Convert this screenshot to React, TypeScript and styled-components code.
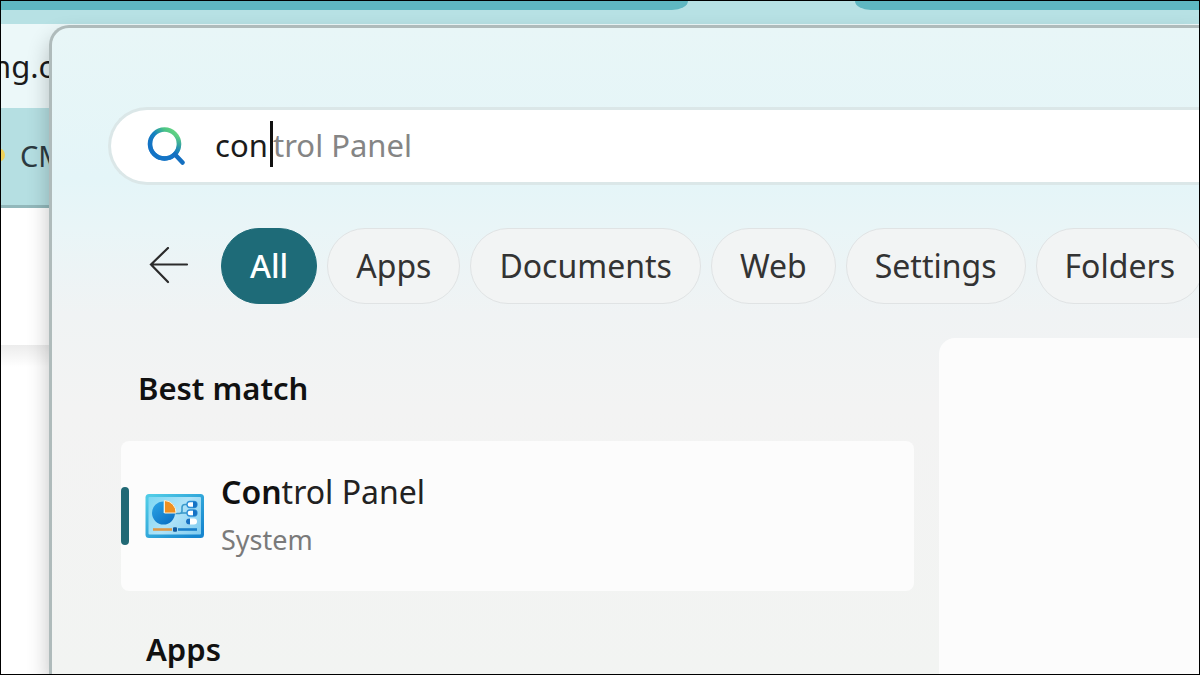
import React, { useState } from "react";
import styled, { createGlobalStyle } from "styled-components";

const GlobalStyle = createGlobalStyle`
  * { box-sizing: border-box; }
  body {
    margin: 0;
    font-family: "Noto Sans", "Open Sans", sans-serif;
    color: #1b1b1b;
  }
  button, input { font: inherit; color: inherit; }
  h2, p { margin: 0; }
`;

const Desktop = styled.main`
  position: relative;
  height: 100vh;
  border: 1px solid #000;
  background: #fff;
  overflow: hidden;
`;

/* Browser window behind the search panel */
const Browser = styled.div`
  display: flex;
  flex-direction: column;
  height: 100%;
`;

const TabStrip = styled.div`
  display: grid;
  grid-template-columns: 687fr 167fr 344fr;
  height: 23px;
  flex: none;
  background: #b7e1e4;
`;

const TabGroup = styled.div<{ $side: "left" | "right" }>`
  height: 9px;
  background: #5fb7c1;
  grid-column: ${(p) => (p.$side === "left" ? 1 : 3)};
  border-radius: ${(p) => (p.$side === "left" ? "0 0 16px 0" : "0 0 0 16px")} / ${(p) =>
    p.$side === "left" ? "0 0 9px 0" : "0 0 0 9px"};
`;

const AddressBar = styled.div`
  display: flex;
  align-items: center;
  height: 84px;
  flex: none;
  background: #ecf8f9;
  font-size: 31px;
`;

const AddressText = styled.span`
  margin-left: -9px;
`;

const BookmarkBar = styled.div`
  display: flex;
  align-items: center;
  gap: 15px;
  height: 100px;
  flex: none;
  padding-bottom: 3px;
  background: #b5dfe2;
  border-bottom: 3px solid #92b8bb;
  font-size: 29px;
  color: #2c3a40;
`;

const BookmarkDot = styled.span`
  width: 14px;
  height: 14px;
  margin-left: -10px;
  border-radius: 50%;
  background: #efd35c;
`;

const PageHeader = styled.div`
  height: 137px;
  flex: none;
`;

const PageBody = styled.div`
  flex: 1;
  background: linear-gradient(#ececec, #fff 22px);
`;

/* Search flyout */
const Panel = styled.section`
  position: absolute;
  inset: 24px 0 0 48px;
  display: flex;
  flex-direction: column;
  border: 3px solid #afbbbb;
  border-width: 3px 0 0 3px;
  border-top-left-radius: 20px;
  background: linear-gradient(#e8f6f7 0, #e4f5f8 150px, #e9f5f7 200px, #f0f3f4 285px, #f3f3f3 380px, #f2f4f2 100%);
  box-shadow: 0 12px 22px rgba(0, 0, 0, 0.24);
  padding: 79px 0 0 56px;
`;

const SearchBox = styled.label`
  display: flex;
  align-items: center;
  height: 78px;
  flex: none;
  padding-left: 36px;
  border: 3px solid #dbe7e8;
  border-right: 0;
  border-radius: 39px 0 0 39px;
  background: #fff;
  font-size: 31px;
`;

const Query = styled.input`
  width: 55px;
  height: 46px;
  margin-left: 30px;
  padding: 0 0 2px;
  border: 0;
  outline: 0;
  background: none;
`;

const Caret = styled.span`
  width: 3px;
  height: 46px;
  margin-bottom: 4px;
  background: #111;
`;

const Suggestion = styled.span`
  padding-bottom: 2px;
  color: #858585;
`;

const Filters = styled.nav`
  display: flex;
  align-items: center;
  gap: 10px;
  flex: none;
  margin-top: 43px;
  padding-left: 41px;
`;

const BackButton = styled.button`
  display: flex;
  width: 62px;
  flex: none;
  padding: 0;
  border: 0;
  background: none;
`;

const Chip = styled.button<{ $active?: boolean }>`
  height: 76px;
  flex: none;
  padding: 0 28px;
  border: 1px solid ${(p) => (p.$active ? "#1e6b78" : "#e0e3e4")};
  border-radius: 38px;
  background: ${(p) => (p.$active ? "#1e6b78" : "#f2f4f4")};
  color: ${(p) => (p.$active ? "#fff" : "#333")};
  font-size: 32px;
  font-weight: ${(p) => (p.$active ? 500 : 400)};
  line-height: 44px;
`;

const Content = styled.div`
  display: grid;
  grid-template-columns: 61fr 20fr;
  gap: 25px;
  flex: 1;
  margin-top: 34px;
  padding-left: 13px;
`;

const Results = styled.div`
  display: flex;
  flex-direction: column;
`;

const Heading = styled.h2<{ $inset: number }>`
  padding: 28px 0 0 ${(p) => p.$inset}px;
  font-size: 31px;
  line-height: 44px;
  font-weight: 600;
  color: #111;
`;

const ResultCard = styled.button`
  display: flex;
  align-items: center;
  height: 150px;
  margin: 31px 0 8px;
  padding: 0;
  border: 0;
  border-radius: 8px;
  background: #fcfcfc;
  text-align: left;
`;

const Accent = styled.span`
  width: 8px;
  height: 58px;
  border-radius: 4px;
  background: #216975;
`;

const ResultIcon = styled.svg`
  margin: 0 16px 0 16px;
`;

const ResultText = styled.span`
  display: flex;
  flex-direction: column;
  gap: 6px;
  padding-bottom: 2px;
`;

const ResultTitle = styled.span`
  font-size: 32px;
  line-height: 44px;
  color: #222;

  b { font-weight: 600; color: #111; }
`;

const ResultKind = styled.span`
  font-size: 27px;
  line-height: 40px;
  color: #7a7a7a;
`;

const Preview = styled.aside`
  border-top-left-radius: 16px;
  background: #fcfcfc;
`;

const SearchIcon = () => (
  <svg width="38" height="40" viewBox="0 0 38 40" fill="none" aria-hidden="true">
    <defs>
      <linearGradient id="lens" x1="6" y1="26" x2="28" y2="6" gradientUnits="userSpaceOnUse">
        <stop offset="0" stopColor="#1170c4" />
        <stop offset="0.45" stopColor="#1480c0" />
        <stop offset="0.8" stopColor="#4cc585" />
        <stop offset="1" stopColor="#62d283" />
      </linearGradient>
      <linearGradient id="rim" x1="0" y1="10" x2="0" y2="32" gradientUnits="userSpaceOnUse">
        <stop offset="0" stopColor="#1474c6" stopOpacity="0" />
        <stop offset="1" stopColor="#1474c6" />
      </linearGradient>
    </defs>
    <circle cx="17.500" cy="18" r="14.500" stroke="url(#lens)" strokeWidth="4.500" />
    <circle cx="17.500" cy="18" r="14.500" stroke="url(#rim)" strokeWidth="4.500" />
    <path d="M28 28.500 35.500 36.500" stroke="#146fc0" strokeWidth="4.500" strokeLinecap="round" />
  </svg>
);

const BackIcon = () => (
  <svg width="40" height="38" viewBox="0 0 40 38" fill="none" stroke="#2b2b2b" strokeWidth="2.200" strokeLinecap="round" aria-hidden="true">
    <path d="M38 17.500H2M19 1 2 17.500 19 35" />
  </svg>
);

const ControlPanelIcon = () => (
  <ResultIcon width="60" height="46" viewBox="0 0 60 46" fill="none" aria-hidden="true">
    <defs>
      <linearGradient id="frame" x1="10" y1="0" x2="46" y2="46" gradientUnits="userSpaceOnUse">
        <stop offset="0" stopColor="#4fcbe6" />
        <stop offset="1" stopColor="#1686cf" />
      </linearGradient>
      <linearGradient id="screen" x1="6" y1="4" x2="52" y2="42" gradientUnits="userSpaceOnUse">
        <stop offset="0" stopColor="#7fd8f3" />
        <stop offset="0.5" stopColor="#b0e3f8" />
        <stop offset="1" stopColor="#83cdf0" />
      </linearGradient>
      <linearGradient id="disc" x1="8" y1="8" x2="26" y2="31" gradientUnits="userSpaceOnUse">
        <stop offset="0" stopColor="#2ba5e6" />
        <stop offset="1" stopColor="#0b70c4" />
      </linearGradient>
    </defs>
    <rect x="0.500" y="1" width="58.500" height="44" rx="3.500" fill="url(#frame)" />
    <rect x="3.500" y="4" width="52.500" height="37.500" rx="1" fill="url(#screen)" />
    <path d="M30 20.500H34.500Q37 20.500 37 18V14.500Q37 11.500 40 11.500H43" stroke="#3d9bcb" strokeWidth="1.600" />
    <path d="M36 20H43" stroke="#3d9bcb" strokeWidth="1.600" />
    <path d="M18.500 8.500A11.500 11.500 0 1 0 30 20H18.500Z" fill="url(#disc)" />
    <path d="M19.500 7.500A12 12 0 0 1 31 20H19.500Z" fill="#ef9020" stroke="#f7efd9" strokeWidth="1" />
    <rect x="42" y="8.500" width="10" height="6" rx="3" fill="#fff" stroke="#2c8fd6" strokeWidth="1.300" />
    <path d="M48 8.500h1a3 3 0 0 1 0 6h-1z" fill="#1672c4" />
    <rect x="42" y="17" width="10" height="6" rx="3" fill="#fff" stroke="#2c8fd6" strokeWidth="1.300" />
    <path d="M48 17h1a3 3 0 0 1 0 6h-1z" fill="#1672c4" />
    <rect x="41" y="25.500" width="11" height="6" rx="3" fill="#fff" />
    <path d="M45 25.500h-1a3 3 0 0 0 0 6h1z" fill="#1672c4" />
    <path d="M8 36.500H27" stroke="#dd9848" strokeWidth="2.600" />
    <path d="M33 36.500H52" stroke="#1a7fca" strokeWidth="2.600" />
    <rect x="28" y="34.300" width="4" height="4.400" rx="1" fill="#12599c" />
  </ResultIcon>
);

const FILTERS = ["All", "Apps", "Documents", "Web", "Settings", "Folders"];

export default function App() {
  const [query, setQuery] = useState("con");
  const [active, setActive] = useState("All");

  return (
    <>
      <GlobalStyle />
      <Desktop>
        <Browser>
          <TabStrip>
            <TabGroup $side="left" />
            <TabGroup $side="right" />
          </TabStrip>
          <AddressBar>
            <AddressText>ng.c</AddressText>
          </AddressBar>
          <BookmarkBar>
            <BookmarkDot />
            <span>CM</span>
          </BookmarkBar>
          <PageHeader />
          <PageBody />
        </Browser>

        <Panel>
          <SearchBox>
            <SearchIcon />
            <Query aria-label="Search" value={query} onChange={(e) => setQuery(e.target.value)} />
            <Caret />
            <Suggestion>trol Panel</Suggestion>
          </SearchBox>

          <Filters>
            <BackButton aria-label="Back">
              <BackIcon />
            </BackButton>
            {FILTERS.map((name) => (
              <Chip key={name} $active={name === active} onClick={() => setActive(name)}>
                {name}
              </Chip>
            ))}
          </Filters>

          <Content>
            <Results>
              <Heading $inset={17}>Best match</Heading>
              <ResultCard>
                <Accent />
                <ControlPanelIcon />
                <ResultText>
                  <ResultTitle>
                    <b>Con</b>trol Panel
                  </ResultTitle>
                  <ResultKind>System</ResultKind>
                </ResultText>
              </ResultCard>
              <Heading $inset={25}>Apps</Heading>
            </Results>
            <Preview />
          </Content>
        </Panel>
      </Desktop>
    </>
  );
}
